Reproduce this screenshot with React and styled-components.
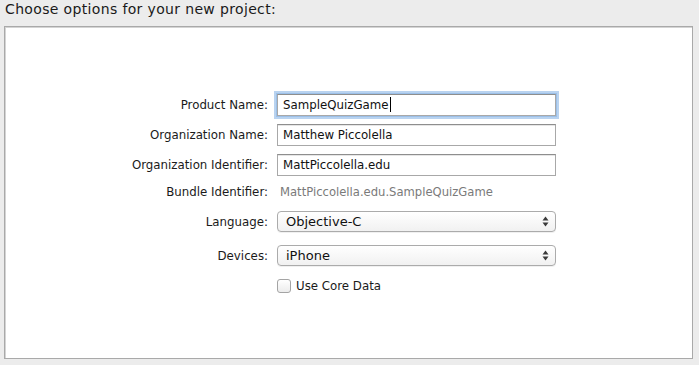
import React from 'react'
import styled, { createGlobalStyle } from 'styled-components'

const GlobalStyle = createGlobalStyle`
  html, body {
    margin: 0;
    padding: 0;
    background: #ececec;
  }
  body {
    font-family: "DejaVu Sans", "Liberation Sans", sans-serif;
    color: #1d1d1d;
  }
`

const Page = styled.div`
  width: 699px;
  height: 365px;
  padding: 0 4px 0 4px;
  box-sizing: border-box;
  background: #ececec;
  display: flex;
  flex-direction: column;
`

const Heading = styled.div`
  font-size: 14px;
  letter-spacing: 0.35px;
  line-height: 17px;
  height: 26px;
  padding-left: 1px;
  padding-top: 1px;
  box-sizing: border-box;
  color: #1a1a1a;
`

const Panel = styled.div`
  width: 689px;
  height: 333px;
  box-sizing: border-box;
  background: #fff;
  border: 1px solid #a9a9a9;
  box-shadow: inset 1px 1px 0 #d4d4d4;
  padding-top: 62px;
`

const Form = styled.div`
  display: grid;
  grid-template-columns: 263px 279px;
  column-gap: 9px;
`

const Label = styled.div`
  grid-column: 1;
  height: ${({ h }) => h}px;
  display: flex;
  align-items: center;
  justify-content: flex-end;
  font-size: 11.8px;
  color: #1a1a1a;
`

const Cell = styled.div`
  grid-column: 2;
  height: ${({ h }) => h}px;
  display: flex;
  align-items: center;
`

const TextField = styled.div`
  width: 100%;
  height: 22px;
  box-sizing: border-box;
  border: 1px solid #a8a8a8;
  border-top-color: #8e8e8e;
  background: #fff;
  box-shadow: ${({ focused }) =>
    focused ? '0 0 0 1px #9cc0e8, 0 0 0 3px #b9d3f0' : 'inset 0 1px 0 #e6e6e6'};
  display: flex;
  align-items: center;
  padding-left: 5px;
  font-size: 11.8px;
  color: #111;
`

const Caret = styled.span`
  display: inline-block;
  width: 1px;
  height: 15px;
  background: #000;
  margin-left: 1px;
`

const Value = styled.div`
  font-size: 11.6px;
  color: #7a7a7a;
  padding-left: 3px;
`

const Popup = styled.div`
  width: 100%;
  height: 21px;
  box-sizing: border-box;
  border: 1px solid #ababab;
  border-radius: 4px;
  background: linear-gradient(#ffffff, #f1f1f1);
  box-shadow: 0 1px 0 rgba(0, 0, 0, 0.06);
  display: flex;
  align-items: center;
  justify-content: space-between;
  padding: 0 6px 0 8px;
  font-size: 13px;
  color: #111;
`

const Arrows = styled.svg`
  width: 7px;
  height: 11px;
`

const CheckRow = styled.label`
  display: flex;
  align-items: center;
  gap: 5px;
  font-size: 11.8px;
  color: #1a1a1a;
`

const Box = styled.span`
  width: 14px;
  height: 14px;
  box-sizing: border-box;
  border: 1px solid #a4a4a4;
  border-radius: 3px;
  background: linear-gradient(#ffffff, #ececec);
`

const rows = [
  { label: 'Product Name:', h: 31, kind: 'text', value: 'SampleQuizGame', focused: true },
  { label: 'Organization Name:', h: 30, kind: 'text', value: 'Matthew Piccolella' },
  { label: 'Organization Identifier:', h: 30, kind: 'text', value: 'MattPiccolella.edu' },
  { label: 'Bundle Identifier:', h: 24, kind: 'value', value: 'MattPiccolella.edu.SampleQuizGame' },
  { label: 'Language:', h: 35, kind: 'popup', value: 'Objective-C' },
  { label: 'Devices:', h: 33, kind: 'popup', value: 'iPhone' },
]

const StepperArrows = () => (
  <Arrows viewBox='0 0 7 11'>
    <path d='M3.5 0.5 L6.5 4.5 L0.5 4.5 Z' fill='#3a3a3a' />
    <path d='M3.5 10.5 L6.5 6.5 L0.5 6.5 Z' fill='#3a3a3a' />
  </Arrows>
)

const Field = ({ row }) => {
  if (row.kind === 'value') return <Value>{row.value}</Value>
  if (row.kind === 'popup') {
    return (
      <Popup>
        <span>{row.value}</span>
        <StepperArrows />
      </Popup>
    )
  }
  return (
    <TextField focused={row.focused}>
      {row.value}
      {row.focused && <Caret />}
    </TextField>
  )
}

export default function App () {
  return (
    <Page>
      <GlobalStyle />
      <Heading>Choose options for your new project:</Heading>
      <Panel>
        <Form>
          {rows.map(row => (
            <React.Fragment key={row.label}>
              <Label h={row.h}>{row.label}</Label>
              <Cell h={row.h}><Field row={row} /></Cell>
            </React.Fragment>
          ))}
          <Cell h={28}>
            <CheckRow>
              <Box />
              Use Core Data
            </CheckRow>
          </Cell>
        </Form>
      </Panel>
    </Page>
  )
}
